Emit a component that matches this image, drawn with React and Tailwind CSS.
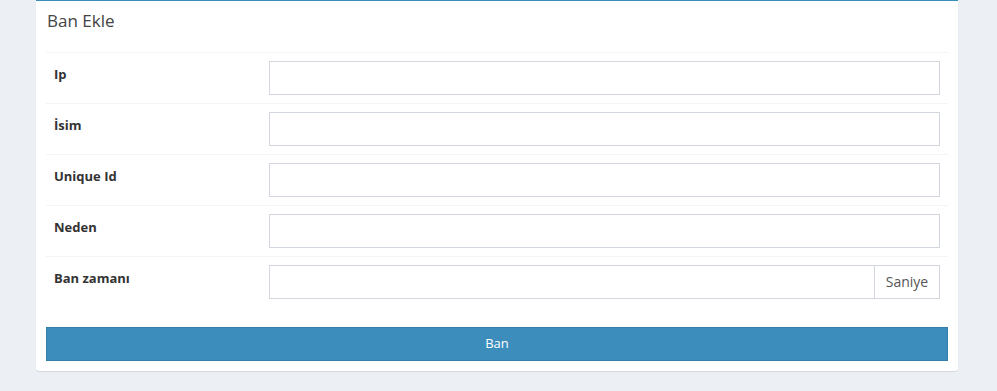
import React from 'react';

const fields = [
  { label: 'Ip' },
  { label: 'İsim' },
  { label: 'Unique Id' },
  { label: 'Neden' },
  { label: 'Ban zamanı', addon: 'Saniye' },
];

function FieldRow({ label, addon }) {
  return (
    <div className="flex border-t border-[#f4f4f4]">
      <div className="w-[215px] shrink-0 p-2">
        <label className="inline-block text-[13px] font-bold leading-5 text-[#333]">{label}</label>
      </div>
      <div className="flex-1 p-2">
        {addon ? (
          <div className="flex">
            <input className="h-[34px] flex-1 border border-[#d2d6de] px-3 text-sm outline-none" />
            <span className="flex h-[34px] w-[65px] items-center justify-center border border-l-0 border-[#d2d6de] text-sm text-[#555]">
              {addon}
            </span>
          </div>
        ) : (
          <input className="block h-[34px] w-full border border-[#d2d6de] px-3 text-sm outline-none" />
        )}
      </div>
    </div>
  );
}

export default function App() {
  return (
    <div className="min-h-[391px] bg-[#ecf0f5] pl-[36px] pr-[39px] font-['Open_Sans',sans-serif]">
      <div className="rounded-b-[3px] border-t border-[#3c8dbc] bg-white shadow-[0_1px_1px_rgba(0,0,0,0.1)]">
        <div className="px-[11px] pt-[11px] pb-[12px]">
          <h3 className="text-[17px] leading-[18px] text-[#444]">Ban Ekle</h3>
        </div>
        <div className="p-[10px]">
          {fields.map((f) => (
            <FieldRow key={f.label} {...f} />
          ))}
        </div>
        <div className="p-[10px]">
          <button className="h-[34px] w-full border border-[#367fa9] bg-[#3c8dbc] text-[13px] text-white">
            Ban
          </button>
        </div>
      </div>
    </div>
  );
}
